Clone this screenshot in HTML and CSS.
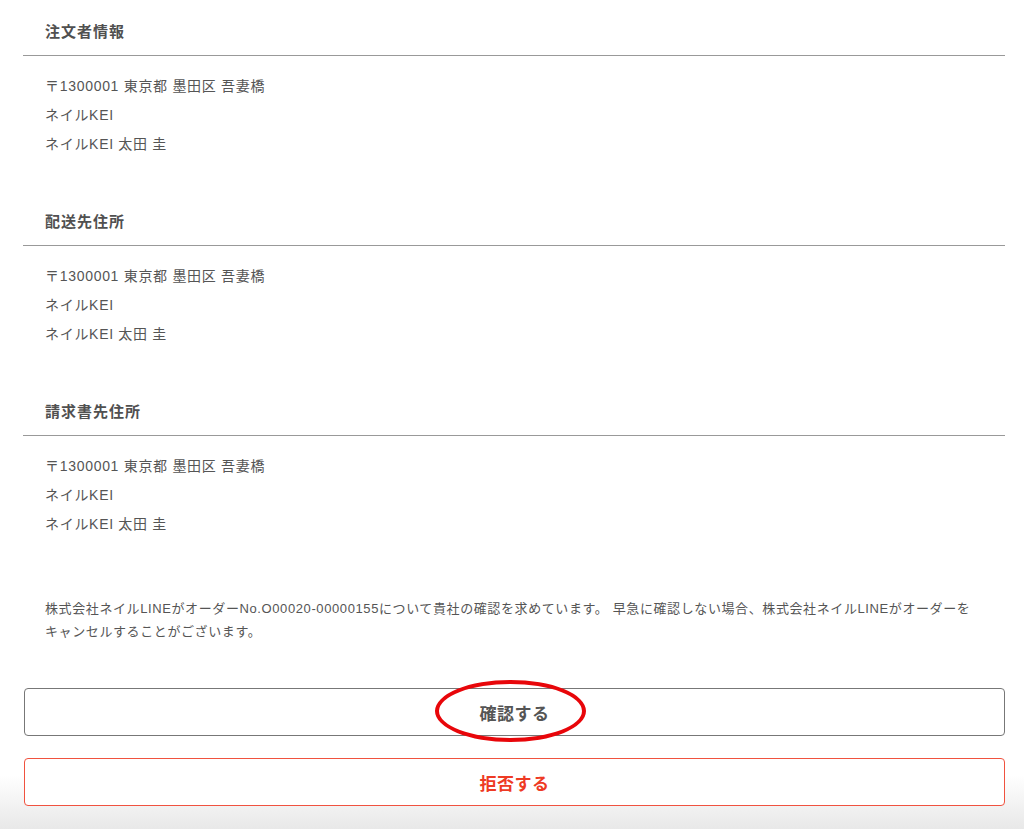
FILE: index.html
```html
<!DOCTYPE html>
<html lang="ja">
<head>
<meta charset="utf-8">
<title>注文確認</title>
<link rel="stylesheet" href="styles.css">
</head>
<body>
<main class="page">
  <section class="info">
    <h2 class="info-title">注文者情報</h2>
    <ul class="info-lines">
      <li>〒1300001 東京都 墨田区 吾妻橋</li>
      <li>ネイルKEI</li>
      <li>ネイルKEI 太田 圭</li>
    </ul>
  </section>
  <section class="info">
    <h2 class="info-title">配送先住所</h2>
    <ul class="info-lines">
      <li>〒1300001 東京都 墨田区 吾妻橋</li>
      <li>ネイルKEI</li>
      <li>ネイルKEI 太田 圭</li>
    </ul>
  </section>
  <section class="info">
    <h2 class="info-title">請求書先住所</h2>
    <ul class="info-lines">
      <li>〒1300001 東京都 墨田区 吾妻橋</li>
      <li>ネイルKEI</li>
      <li>ネイルKEI 太田 圭</li>
    </ul>
  </section>
  <p class="notice">株式会社ネイルLINEがオーダーNo.O00020-00000155について貴社の確認を求めています。 早急に確認しない場合、株式会社ネイルLINEがオーダーをキャンセルすることがございます。</p>
  <div class="actions">
    <button class="btn btn-confirm" type="button">確認する<span class="mark"></span></button>
    <button class="btn btn-reject" type="button">拒否する</button>
  </div>
</main>
</body>
</html>
```

FILE: styles.css
```css
html, body {
  margin: 0;
  padding: 0;
}
html {
  height: 829px;
  background: linear-gradient(to bottom, #fff 0, #fff 775px, #e8e8e8 829px);
}
body {
  font-family: "Liberation Sans", "Noto Sans CJK JP", sans-serif;
  color: #555;
  font-size: 14px;
}
.page {
  margin: 0 19px 0 23px;
  display: flex;
  flex-direction: column;
}
.info {
  padding-top: 22px;
  margin-bottom: 31.5px;
}
.info-title {
  margin: 0;
  padding: 0 22px 13px;
  font-size: 15px;
  line-height: 20px;
  letter-spacing: 1px;
  font-weight: bold;
  color: #505050;
  border-bottom: 1px solid #999;
}
.info-lines {
  list-style: none;
  margin: 15.5px 0 0;
  padding: 0 22px;
  line-height: 29px;
  letter-spacing: 0.7px;
}
.notice {
  margin: 26.5px 0 0;
  padding: 0 22px;
  font-size: 13px;
  line-height: 23px;
  letter-spacing: 0.6px;
  color: #555;
}
.actions {
  margin-top: 45.5px;
  display: flex;
  flex-direction: column;
  gap: 22px;
  padding-left: 1px;
}
.btn {
  position: relative;
  height: 48px;
  background: #fff;
  border-radius: 4px;
  font-family: "Liberation Sans", "Noto Sans CJK JP", sans-serif;
  font-size: 17px;
  letter-spacing: 0.5px;
  font-weight: bold;
  padding: 0;
}
.btn-confirm {
  border: 1px solid #777;
  color: #555;
}
.btn-reject {
  border: 1px solid #f0523f;
  color: #ee3a24;
}
.mark {
  position: absolute;
  left: 410px;
  top: -9px;
  width: 151px;
  height: 62px;
  box-sizing: border-box;
  border: 4px solid #e8060a;
  border-radius: 50%;
}
```
